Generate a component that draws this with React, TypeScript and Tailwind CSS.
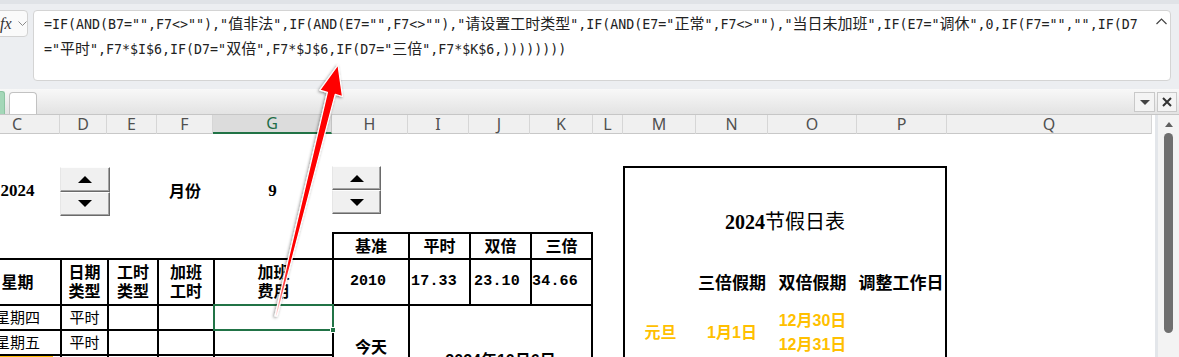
import React from "react";

const CJK = /([\u3000-\u9fff\uff00-\uffef]+)/;

function Mixed({ text }: { text: string }) {
  const parts = text.split(CJK);
  return (
    <>
      {parts.map((p, i) =>
        /[\u3000-\u9fff\uff00-\uffef]/.test(p) ? (
          <span key={i} className="text-[15px]">
            {p}
          </span>
        ) : (
          <React.Fragment key={i}>{p}</React.Fragment>
        )
      )}
    </>
  );
}

const LINE1 =
  '=IF(AND(B7="",F7<>""),"值非法",IF(AND(E7="",F7<>""),"请设置工时类型",IF(AND(E7="正常",F7<>""),"当日未加班",IF(E7="调休",0,IF(F7="","",IF(D7';
const LINE2 = '="平时",F7*$I$6,IF(D7="双倍",F7*$J$6,IF(D7="三倍",F7*$K$6,))))))))';

const COLS =
  "grid grid-cols-[85px_47px_50px_56px_119px_76px_61px_61px_63px_30px_73px_72px_89px_90px_205px]";
const LETTERS = ["C", "D", "E", "F", "G", "H", "I", "J", "K", "L", "M", "N", "O", "P", "Q"];

function SpinBtn({ up }: { up?: boolean }) {
  return (
    <div className="flex flex-1 items-center justify-center border border-t-[#fdfdfd] border-l-[#e6e6e6] border-r-[#6a6a6a] border-b-[#6a6a6a] bg-[#f0f0f0] shadow-[inset_-1px_-1px_0_#a3a3a3]">
      {up ? (
        <div className="h-0 w-0 border-x-[7px] border-b-[7px] border-x-transparent border-b-black" />
      ) : (
        <div className="h-0 w-0 border-x-[7px] border-t-[7px] border-x-transparent border-t-black" />
      )}
    </div>
  );
}

const cell = "flex items-center justify-center border-black";

export default function App() {
  return (
    <div className="relative h-[357px] w-[1179px] overflow-hidden bg-white font-['Noto_Sans','Noto_Sans_CJK_SC',sans-serif] text-black">
      {/* Formula bar */}
      <div className="flex h-[89px] items-start gap-[5px] border-t-4 border-[#e0e3e7] bg-[#eceef1] pt-[6px]">
        <div className="-ml-[10px] flex h-[27px] w-[38px] items-center rounded-[4px] border border-[#d2d2d2] bg-[#fafafa] pl-[9px]">
          <span className="font-['Liberation_Serif',serif] text-[16px] italic leading-none text-[#333]">fx</span>
          <svg className="ml-[6px]" width="9" height="6" viewBox="0 0 9 6">
            <polyline points="0.5,0.5 4.5,4.5 8.5,0.5" fill="none" stroke="#8a8a8a" strokeWidth="1" />
          </svg>
        </div>
        <div className="relative h-[71px] w-[1138px] rounded-[4px] border border-[#d4d4d4] bg-white pl-[10px] pt-[1px] font-['DejaVu_Sans_Mono','Noto_Sans_CJK_SC',monospace] text-[13.3px] leading-[24px] whitespace-pre text-[#222]">
          <div>
            <Mixed text={LINE1} />
          </div>
          <div>
            <Mixed text={LINE2} />
          </div>
          <svg className="absolute right-[3px] top-[7px]" width="11" height="7" viewBox="0 0 11 7">
            <polyline points="0.5,6 5.5,1 10.5,6" fill="none" stroke="#444" strokeWidth="1.2" />
          </svg>
        </div>
      </div>

      {/* Tab bar */}
      <div className="flex h-[26px] items-end border-b border-[#c6c6c6] bg-linear-to-b from-[#f8f8f8] to-[#e3e3e3]">
        <div className="h-[23px] w-[5px] rounded-tr-[3px] border border-b-0 border-l-0 border-[#8cc4a2] bg-[#a4d7b8]" />
        <div className="ml-[4px] h-[22px] w-[28px] rounded-t-[4px] border border-b-0 border-[#c2c2c2] bg-white" />
        <div className="mb-[1px] ml-auto flex gap-[2px] self-start pt-[3px] pr-[2px]">
          <div className="flex h-[20px] w-[21px] items-center justify-center border border-[#c9c9c9] bg-[#f4f4f4]">
            <div className="h-0 w-0 border-x-[5px] border-t-[5px] border-x-transparent border-t-[#444]" />
          </div>
          <div className="flex h-[20px] w-[20px] items-center justify-center border border-[#c9c9c9] bg-[#f4f4f4]">
            <svg width="10" height="10" viewBox="0 0 10 10">
              <path d="M1 1 L9 9 M9 1 L1 9" stroke="#333" strokeWidth="2" />
            </svg>
          </div>
        </div>
      </div>

      {/* Sheet */}
      <div className="flex h-[242px]">
        <div className="w-[1152px] overflow-hidden">
          <div className="-ml-[25px] w-[1177px]">
            <div className={`${COLS} h-[19px] border-b border-[#c8c8c8] bg-[#f0f0f0]`}>
              {LETTERS.map((l) =>
                l === "G" ? (
                  <div
                    key={l}
                    className="border-r border-b-2 border-r-[#c4c4c4] border-b-[#217346] bg-[#dcdcdc] text-center text-[16px] leading-[17px] text-[#1f6e48]"
                  >
                    {l}
                  </div>
                ) : (
                  <div key={l} className="border-r border-[#d6d6d6] text-center text-[16px] leading-[18px] text-[#505050]">
                    {l}
                  </div>
                )
              )}
            </div>

            <div className={`${COLS} grid-rows-[32px_50px_16px_26px_46px_25px_25px_36px]`}>
              {/* row 2 */}
              <div className="col-start-1 row-start-2 flex items-center justify-center font-['Liberation_Serif',serif] text-[17px] font-bold">
                2024
              </div>
              <div className="col-start-2 row-start-2 pt-[1px]">
                <div className="flex h-[49px] w-[50px] flex-col">
                  <SpinBtn up />
                  <SpinBtn />
                </div>
              </div>
              <div className="col-start-4 row-start-2 flex items-center justify-center text-[16px] font-bold">月份</div>
              <div className="col-start-5 row-start-2 flex items-center justify-center font-['Liberation_Serif',serif] text-[17px] font-bold">
                9
              </div>
              <div className="col-start-6 row-start-2">
                <div className="flex h-[48px] w-[49px] flex-col">
                  <SpinBtn up />
                  <SpinBtn />
                </div>
              </div>

              {/* holiday box */}
              <div className="col-span-4 col-start-11 row-span-7 row-start-2 border-x-2 border-t-2 border-black">
                <div className="pt-[40px] text-center text-[20px] leading-[28px]">
                  <span className="font-['Liberation_Serif',serif] font-bold">2024</span>
                  <span>节假日表</span>
                </div>
                <div className="mt-[35px] grid grid-cols-[71px_72px_89px_88px] text-[17px] font-bold leading-[24px]">
                  <div />
                  <div className="text-center whitespace-nowrap">三倍假期</div>
                  <div className="text-center whitespace-nowrap">双倍假期</div>
                  <div className="text-center whitespace-nowrap">调整工作日</div>
                </div>
                <div className="mt-[14px] grid grid-cols-[71px_72px_89px_88px] items-center font-['Liberation_Sans','Noto_Sans_CJK_SC',sans-serif] text-[16px] font-bold leading-[24px] text-[#ffc000]">
                  <div className="text-center">元旦</div>
                  <div className="text-center">1月1日</div>
                  <div className="text-center">
                    <div>12月30日</div>
                    <div>12月31日</div>
                  </div>
                  <div />
                </div>
              </div>

              {/* rate table header row 4 */}
              <div className={`${cell} col-start-6 row-start-4 border-t-2 border-l-2 text-[16px] font-bold`}>基准</div>
              <div className={`${cell} col-start-7 row-start-4 border-t-2 border-l-2 text-[16px] font-bold`}>平时</div>
              <div className={`${cell} col-start-8 row-start-4 border-t-2 border-l-2 text-[16px] font-bold`}>双倍</div>
              <div className={`${cell} col-start-9 row-start-4 border-t-2 border-r-2 border-l-2 text-[16px] font-bold`}>
                三倍
              </div>

              {/* row 5 */}
              <div className={`${cell} col-start-1 row-start-5 border-t-2 text-[16px] font-bold`}>星期</div>
              <div className={`${cell} col-start-2 row-start-5 flex-col border-t-2 border-l-2 text-[16px] leading-[19px] font-bold`}>
                <div>日期</div>
                <div>类型</div>
              </div>
              <div className={`${cell} col-start-3 row-start-5 flex-col border-t-2 border-l-2 text-[16px] leading-[19px] font-bold`}>
                <div>工时</div>
                <div>类型</div>
              </div>
              <div className={`${cell} col-start-4 row-start-5 flex-col border-t-2 border-l-2 text-[16px] leading-[19px] font-bold`}>
                <div>加班</div>
                <div>工时</div>
              </div>
              <div className={`${cell} col-start-5 row-start-5 flex-col border-t-2 border-l-2 text-[16px] leading-[19px] font-bold`}>
                <div>加班</div>
                <div>费用</div>
              </div>
              <div className={`${cell} col-start-6 row-start-5 border-t-2 border-l-2 pr-[6px] font-['Liberation_Mono',monospace] text-[15px] font-bold`}>
                2010
              </div>
              <div className="col-start-7 row-start-5 flex items-center border-t-2 border-l-2 border-black pl-[1px] font-['Liberation_Mono',monospace] text-[15px] font-bold tracking-[0.2px]">
                17.33
              </div>
              <div className="col-start-8 row-start-5 flex items-center border-t-2 border-l-2 border-black pl-[3px] font-['Liberation_Mono',monospace] text-[15px] font-bold tracking-[0.2px]">
                23.10
              </div>
              <div className="col-start-9 row-start-5 flex items-center border-t-2 border-r-2 border-l-2 border-black font-['Liberation_Mono',monospace] text-[15px] font-bold tracking-[0.2px]">
                34.66
              </div>

              {/* row 6 */}
              <div className={`${cell} col-start-1 row-start-6 border-t-2 text-[15px]`}>星期四</div>
              <div className={`${cell} col-start-2 row-start-6 border-t-2 border-l-2 text-[15px]`}>平时</div>
              <div className={`${cell} col-start-3 row-start-6 border-t-2 border-l-2`} />
              <div className={`${cell} col-start-4 row-start-6 border-t-2 border-l-2`} />
              <div className={`${cell} relative col-start-5 row-start-6 border-t-2 border-l-2`}>
                <div className="absolute -top-[2px] -left-[2px] h-[27px] w-[121px] border-2 border-[#217346]">
                  <div className="absolute -right-[4px] -bottom-[4px] h-[6px] w-[6px] border border-white bg-[#217346]" />
                </div>
              </div>
              <div className="col-start-6 row-span-3 row-start-6 flex justify-center border-t-2 border-l-2 border-black pt-[30px] text-[16px] leading-[22px] font-bold">
                今天
              </div>
              <div className="col-span-3 col-start-7 row-span-3 row-start-6 flex justify-center border-t-2 border-r-2 border-l-2 border-black pt-[44px] font-['Liberation_Sans','Noto_Sans_CJK_SC',sans-serif] text-[16px] leading-[22px] font-bold">
                2024年10月6日
              </div>

              {/* row 7 */}
              <div className={`${cell} col-start-1 row-start-7 border-t-2 text-[15px]`}>星期五</div>
              <div className={`${cell} col-start-2 row-start-7 border-t-2 border-l-2 text-[15px]`}>平时</div>
              <div className={`${cell} col-start-3 row-start-7 border-t-2 border-l-2`} />
              <div className={`${cell} col-start-4 row-start-7 border-t-2 border-l-2`} />
              <div className={`${cell} col-start-5 row-start-7 border-t-2 border-l-2`} />

              {/* row 8 */}
              <div className="col-start-1 row-start-8 border-t-2 border-black">
                <div className="h-full w-[78px] bg-[#ffc000]" />
              </div>
              <div className="col-start-2 row-start-8 border-t-2 border-l-2 border-black" />
              <div className="col-start-3 row-start-8 border-t-2 border-l-2 border-black" />
              <div className="col-start-4 row-start-8 border-t-2 border-l-2 border-black" />
              <div className="col-start-5 row-start-8 border-t-2 border-l-2 border-black" />
            </div>
          </div>
        </div>

        {/* Scrollbar */}
        <div className="w-[27px] bg-white pl-[3px]">
          <div className="flex h-full flex-col items-center border-l-[3px] border-[#e3e6ea] bg-[#f3f3f3] pt-[7px]">
            <div className="h-0 w-0 border-x-[4px] border-b-[5px] border-x-transparent border-b-[#606060]" />
            <div className="mt-[6px] h-[200px] w-[9px] rounded-full bg-[#6f6f6f]" />
          </div>
        </div>
      </div>

      {/* Red arrow annotation */}
      <svg className="pointer-events-none absolute inset-0" width="1179" height="357" viewBox="0 0 1179 357">
        <defs>
          <linearGradient id="arrowGrad" gradientUnits="userSpaceOnUse" x1="276" y1="316" x2="338" y2="66">
            <stop offset="0" stopColor="#ffe4e4" />
            <stop offset="0.1" stopColor="#ff5a5a" />
            <stop offset="0.22" stopColor="#ff0000" />
            <stop offset="1" stopColor="#ff0000" />
          </linearGradient>
          <filter id="arrowShadow" x="-50%" y="-10%" width="200%" height="120%">
            <feDropShadow dx="-1" dy="1" stdDeviation="1.5" floodColor="#000" floodOpacity="0.45" />
          </filter>
        </defs>
        <polygon
          points="338,65 342.5,96.5 335.2,94.3 277,316.2 275,315.8 327.4,92.4 319.8,90.2"
          fill="url(#arrowGrad)"
          stroke="#ffffff"
          strokeWidth="1.2"
          strokeLinejoin="round"
          filter="url(#arrowShadow)"
        />
      </svg>
    </div>
  );
}
